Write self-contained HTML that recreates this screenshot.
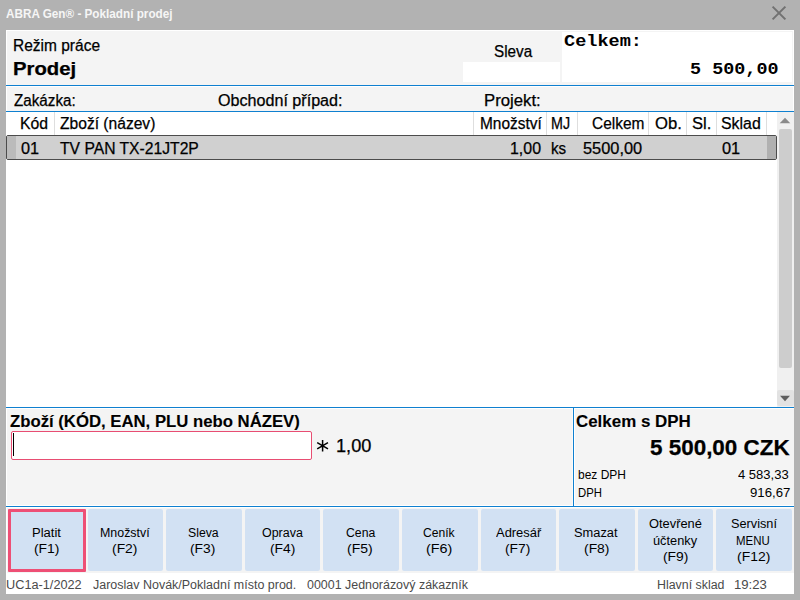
<!DOCTYPE html>
<html><head><meta charset="utf-8">
<style>
*{box-sizing:border-box;margin:0;padding:0}
html,body{width:800px;height:600px;overflow:hidden;background:#b2b2b2;font-family:"Liberation Sans",sans-serif;color:#000}
.a{position:absolute;white-space:nowrap;line-height:1;transform-origin:0 0}
.bl{background:#0f80d0;height:1px;left:6px;width:788px}
.sep{top:112px;height:23px;width:1px;background:#dedede}
.btn{top:509px;height:62px;background:#d2e1f3;border-radius:2px}
</style></head><body>
<svg class="a" style="left:770px;top:4px" width="18" height="18" viewBox="0 0 18 18"><path d="M2.6 2.6 L15.4 15.4 M15.4 2.6 L2.6 15.4" stroke="#717171" stroke-width="2" fill="none"/></svg>
<div class="a" style="left:6px;top:30px;width:788px;height:564px;background:#f4f4f4"></div>

<!-- top panel -->
<div class="a" style="left:6px;top:30px;width:788px;height:1px;background:#fff"></div>
<div class="a" style="left:6px;top:30px;width:1px;height:81px;background:#fff"></div>
<div class="a" style="left:793px;top:30px;width:1px;height:81px;background:#fff"></div>
<div class="a" style="left:6px;top:86px;width:788px;height:1px;background:#fff"></div>
<div class="a" style="left:463px;top:62px;width:97px;height:20px;background:#fff"></div>
<div class="a" style="left:562px;top:32px;width:230px;height:50px;background:#fff"></div>
<div class="a bl" style="top:85px"></div>
<div class="a bl" style="top:111px"></div>

<!-- table -->
<div class="a" style="left:6px;top:112px;width:788px;height:295px;background:#fff"></div>
<div class="a sep" style="left:54px"></div>
<div class="a sep" style="left:473px"></div>
<div class="a sep" style="left:546px"></div>
<div class="a sep" style="left:577px"></div>
<div class="a sep" style="left:648px"></div>
<div class="a sep" style="left:686px"></div>
<div class="a sep" style="left:716px"></div>
<div class="a sep" style="left:766px"></div>
<div class="a" style="left:6px;top:135px;width:771px;height:25px;background:#d0d0d0;border:1px solid #4c4c4c;border-radius:2px"></div>
<div class="a" style="left:7px;top:136px;width:9px;height:23px;background:#bbbbbb"></div>
<div class="a" style="left:767px;top:136px;width:9px;height:23px;background:#b0b0b0"></div>
<!-- scrollbar -->
<div class="a" style="left:777px;top:112px;width:17px;height:295px;background:#f0f0f0"></div>
<div class="a" style="left:779px;top:129px;width:13px;height:239px;background:#cdcdcd;border-radius:2px"></div>
<svg class="a" style="left:779px;top:117px" width="12" height="7"><path d="M0.7 6.3 L6 0.7 L11.3 6.3 Z" fill="#8a8a8a"/></svg>
<div class="a" style="left:777px;top:390px;width:17px;height:16px;background:#e2e2e2;border-radius:2px"></div>
<svg class="a" style="left:779px;top:395px" width="12" height="7"><path d="M1 0.8 L6 6.3 L11 0.8 Z" fill="#5e5e5e"/></svg>
<div class="a bl" style="top:407px"></div>

<!-- bottom panel -->
<div class="a" style="left:6px;top:408px;width:788px;height:1px;background:#fff"></div>
<div class="a" style="left:6px;top:408px;width:1px;height:98px;background:#fff"></div>
<div class="a" style="left:574px;top:408px;width:1px;height:98px;background:#fff"></div>
<div class="a" style="left:572px;top:409px;width:1px;height:96px;background:#fafafa"></div>
<div class="a" style="left:6px;top:505px;width:788px;height:1px;background:#fff"></div>
<div class="a" style="left:6px;top:507px;width:788px;height:1px;background:#fff"></div>
<div class="a" style="left:6px;top:507px;width:1px;height:66px;background:#fff"></div>
<div class="a" style="left:11px;top:431px;width:301px;height:29px;background:#fff;border:1px solid #e84d72;border-radius:2px"></div>
<div class="a" style="left:13px;top:433px;width:1px;height:23px;background:#000"></div>
<svg class="a" style="left:315px;top:437.5px" width="16" height="16" viewBox="0 0 16 16"><path d="M7.6 2 V13.4 M2.2 4.6 L13 10.8 M13 4.6 L2.2 10.8" stroke="#000" stroke-width="1.5" fill="none"/></svg>
<div class="a" style="left:573px;top:408px;width:1px;height:98px;background:#0f80d0"></div>
<div class="a bl" style="top:506px"></div>

<!-- buttons -->
<div class="a btn" style="left:8px;width:78px;height:63px;border:3px solid #ee4f75;border-radius:1px"></div>
<div class="a btn" style="left:88px;width:75px"></div>
<div class="a btn" style="left:166px;width:76px"></div>
<div class="a btn" style="left:245px;width:75px"></div>
<div class="a btn" style="left:323px;width:76px"></div>
<div class="a btn" style="left:402px;width:76px"></div>
<div class="a btn" style="left:481px;width:75px"></div>
<div class="a btn" style="left:559px;width:76px"></div>
<div class="a btn" style="left:638px;width:75px"></div>
<div class="a btn" style="left:716px;width:76px"></div>
<!-- status -->
<div class="a" style="left:6px;top:573px;width:788px;height:21px;background:#fff"></div>
<div class="a" style="left:6.30px;top:8.00px;font-size:12px;font-weight:bold;color:#f6f6f6;transform:scaleX(0.9770)">ABRA Gen® - Pokladní prodej</div>
<div class="a" style="left:13.25px;top:37.70px;font-size:16px;-webkit-text-stroke:0.25px;transform:scaleX(0.9691)">Režim práce</div>
<div class="a" style="left:12.77px;top:61.00px;font-size:17.5px;font-weight:bold;-webkit-text-stroke:0.25px;transform:scaleX(1.1578)">Prodej</div>
<div class="a" style="left:494.08px;top:43.80px;font-size:16px;-webkit-text-stroke:0.25px;transform:scaleX(0.9521)">Sleva</div>
<div class="a" style="left:564.30px;top:33.70px;font-size:16px;font-weight:bold;font-family:'Liberation Mono',monospace;transform:scaleX(1.1593)">Celkem:</div>
<div class="a" style="left:689.52px;top:60.75px;font-size:17px;font-weight:bold;font-family:'Liberation Mono',monospace;transform:scaleX(1.0845)">5 500,00</div>
<div class="a" style="left:14.13px;top:92.60px;font-size:16px;-webkit-text-stroke:0.25px;transform:scaleX(0.9497)">Zakázka:</div>
<div class="a" style="left:217.64px;top:92.80px;font-size:16px;-webkit-text-stroke:0.25px;transform:scaleX(1.0070)">Obchodní případ:</div>
<div class="a" style="left:484.38px;top:92.80px;font-size:16px;-webkit-text-stroke:0.25px;transform:scaleX(1.0459)">Projekt:</div>
<div class="a" style="left:20.35px;top:116.30px;font-size:16px;-webkit-text-stroke:0.25px;transform:scaleX(0.9863)">Kód</div>
<div class="a" style="left:60.30px;top:116.30px;font-size:16px;-webkit-text-stroke:0.25px;transform:scaleX(0.9749)">Zboží (název)</div>
<div class="a" style="left:480.08px;top:116.30px;font-size:16px;-webkit-text-stroke:0.25px;transform:scaleX(0.9647)">Množství</div>
<div class="a" style="left:551.35px;top:116.30px;font-size:16px;-webkit-text-stroke:0.25px;transform:scaleX(0.8934)">MJ</div>
<div class="a" style="left:591.98px;top:116.30px;font-size:16px;-webkit-text-stroke:0.25px;transform:scaleX(0.9669)">Celkem</div>
<div class="a" style="left:655.20px;top:116.30px;font-size:16px;-webkit-text-stroke:0.25px;transform:scaleX(1.0415)">Ob.</div>
<div class="a" style="left:692.30px;top:116.30px;font-size:16px;-webkit-text-stroke:0.25px;transform:scaleX(1.0362)">Sl.</div>
<div class="a" style="left:721.30px;top:116.30px;font-size:16px;-webkit-text-stroke:0.25px;transform:scaleX(0.9922)">Sklad</div>
<div class="a" style="left:20.96px;top:140.75px;font-size:16px;-webkit-text-stroke:0.25px;transform:scaleX(1.0155)">01</div>
<div class="a" style="left:60.23px;top:140.75px;font-size:16px;-webkit-text-stroke:0.25px;transform:scaleX(0.9799)">TV PAN TX-21JT2P</div>
<div class="a" style="left:509.98px;top:140.75px;font-size:16px;-webkit-text-stroke:0.25px;transform:scaleX(0.9953)">1,00</div>
<div class="a" style="left:551.35px;top:140.75px;font-size:16px;-webkit-text-stroke:0.25px;transform:scaleX(0.9455)">ks</div>
<div class="a" style="left:583.35px;top:140.75px;font-size:16px;-webkit-text-stroke:0.25px;transform:scaleX(1.0220)">5500,00</div>
<div class="a" style="left:722.18px;top:140.75px;font-size:16px;-webkit-text-stroke:0.25px;transform:scaleX(1.0230)">01</div>
<div class="a" style="left:10.30px;top:413.50px;font-size:16px;font-weight:bold;-webkit-text-stroke:0.1px;transform:scaleX(1.0451)">Zboží (KÓD, EAN, PLU nebo NÁZEV)</div>
<div class="a" style="left:336.26px;top:437.50px;font-size:17.6px;-webkit-text-stroke:0.25px;transform:scaleX(1.0329)">1,00</div>
<div class="a" style="left:575.64px;top:413.60px;font-size:16px;font-weight:bold;-webkit-text-stroke:0.1px;transform:scaleX(1.0572)">Celkem s DPH</div>
<div class="a" style="left:650.20px;top:436.50px;font-size:21.7px;font-weight:bold;-webkit-text-stroke:0.25px;transform:scaleX(1.0342)">5 500,00 CZK</div>
<div class="a" style="left:577.64px;top:468.60px;font-size:12px;transform:scaleX(0.9984)">bez DPH</div>
<div class="a" style="left:738.28px;top:468.60px;font-size:12px;transform:scaleX(1.0849)">4 583,33</div>
<div class="a" style="left:577.64px;top:487.00px;font-size:12px;transform:scaleX(0.9448)">DPH</div>
<div class="a" style="left:749.76px;top:487.00px;font-size:12px;transform:scaleX(1.0979)">916,67</div>
<div class="a" style="left:6.42px;top:578.50px;font-size:12px;color:#4a4a4a;transform:scaleX(1.0603)">UC1a-1/2022</div>
<div class="a" style="left:92.96px;top:578.50px;font-size:12px;color:#4a4a4a;transform:scaleX(1.0402)">Jaroslav Novák/Pokladní místo prod.</div>
<div class="a" style="left:307.06px;top:578.50px;font-size:12px;color:#4a4a4a;transform:scaleX(1.0355)">00001 Jednorázový zákazník</div>
<div class="a" style="left:657.42px;top:578.50px;font-size:12px;color:#4a4a4a;transform:scaleX(1.0312)">Hlavní sklad</div>
<div class="a" style="left:733.52px;top:578.50px;font-size:12px;color:#4a4a4a;transform:scaleX(1.0932)">19:23</div>
<div class="a" style="left:32.42px;top:526.80px;font-size:12.5px;transform:scaleX(1.0410)">Platit</div>
<div class="a" style="left:34.20px;top:543.00px;font-size:12.5px;transform:scaleX(1.1100)">(F1)</div>
<div class="a" style="left:100.30px;top:526.80px;font-size:12.5px;transform:scaleX(0.9924)">Množství</div>
<div class="a" style="left:112.42px;top:543.00px;font-size:12.5px;transform:scaleX(1.1114)">(F2)</div>
<div class="a" style="left:187.98px;top:526.80px;font-size:12.5px;transform:scaleX(0.9817)">Sleva</div>
<div class="a" style="left:190.08px;top:543.00px;font-size:12.5px;transform:scaleX(1.1059)">(F3)</div>
<div class="a" style="left:261.64px;top:526.80px;font-size:12.5px;transform:scaleX(0.9968)">Oprava</div>
<div class="a" style="left:269.64px;top:543.00px;font-size:12.5px;transform:scaleX(1.1059)">(F4)</div>
<div class="a" style="left:345.64px;top:526.80px;font-size:12.5px;transform:scaleX(0.9781)">Cena</div>
<div class="a" style="left:347.20px;top:543.00px;font-size:12.5px;transform:scaleX(1.1194)">(F5)</div>
<div class="a" style="left:423.30px;top:526.80px;font-size:12.5px;transform:scaleX(0.9702)">Ceník</div>
<div class="a" style="left:425.86px;top:543.00px;font-size:12.5px;transform:scaleX(1.1515)">(F6)</div>
<div class="a" style="left:495.96px;top:526.80px;font-size:12.5px;transform:scaleX(1.0345)">Adresář</div>
<div class="a" style="left:505.08px;top:543.00px;font-size:12.5px;transform:scaleX(1.1059)">(F7)</div>
<div class="a" style="left:574.30px;top:526.80px;font-size:12.5px;transform:scaleX(1.0263)">Smazat</div>
<div class="a" style="left:583.76px;top:543.00px;font-size:12.5px;transform:scaleX(1.1114)">(F8)</div>
<div class="a" style="left:648.54px;top:518.40px;font-size:12.5px;transform:scaleX(1.0288)">Otevřené</div>
<div class="a" style="left:652.76px;top:534.70px;font-size:12.5px;transform:scaleX(1.0227)">účtenky</div>
<div class="a" style="left:662.64px;top:550.70px;font-size:12.5px;transform:scaleX(1.1059)">(F9)</div>
<div class="a" style="left:730.64px;top:518.40px;font-size:12.5px;transform:scaleX(1.0170)">Servisní</div>
<div class="a" style="left:736.42px;top:534.70px;font-size:12.5px;transform:scaleX(0.9156)">MENU</div>
<div class="a" style="left:737.20px;top:550.70px;font-size:12.5px;transform:scaleX(1.1145)">(F12)</div>
</body></html>
